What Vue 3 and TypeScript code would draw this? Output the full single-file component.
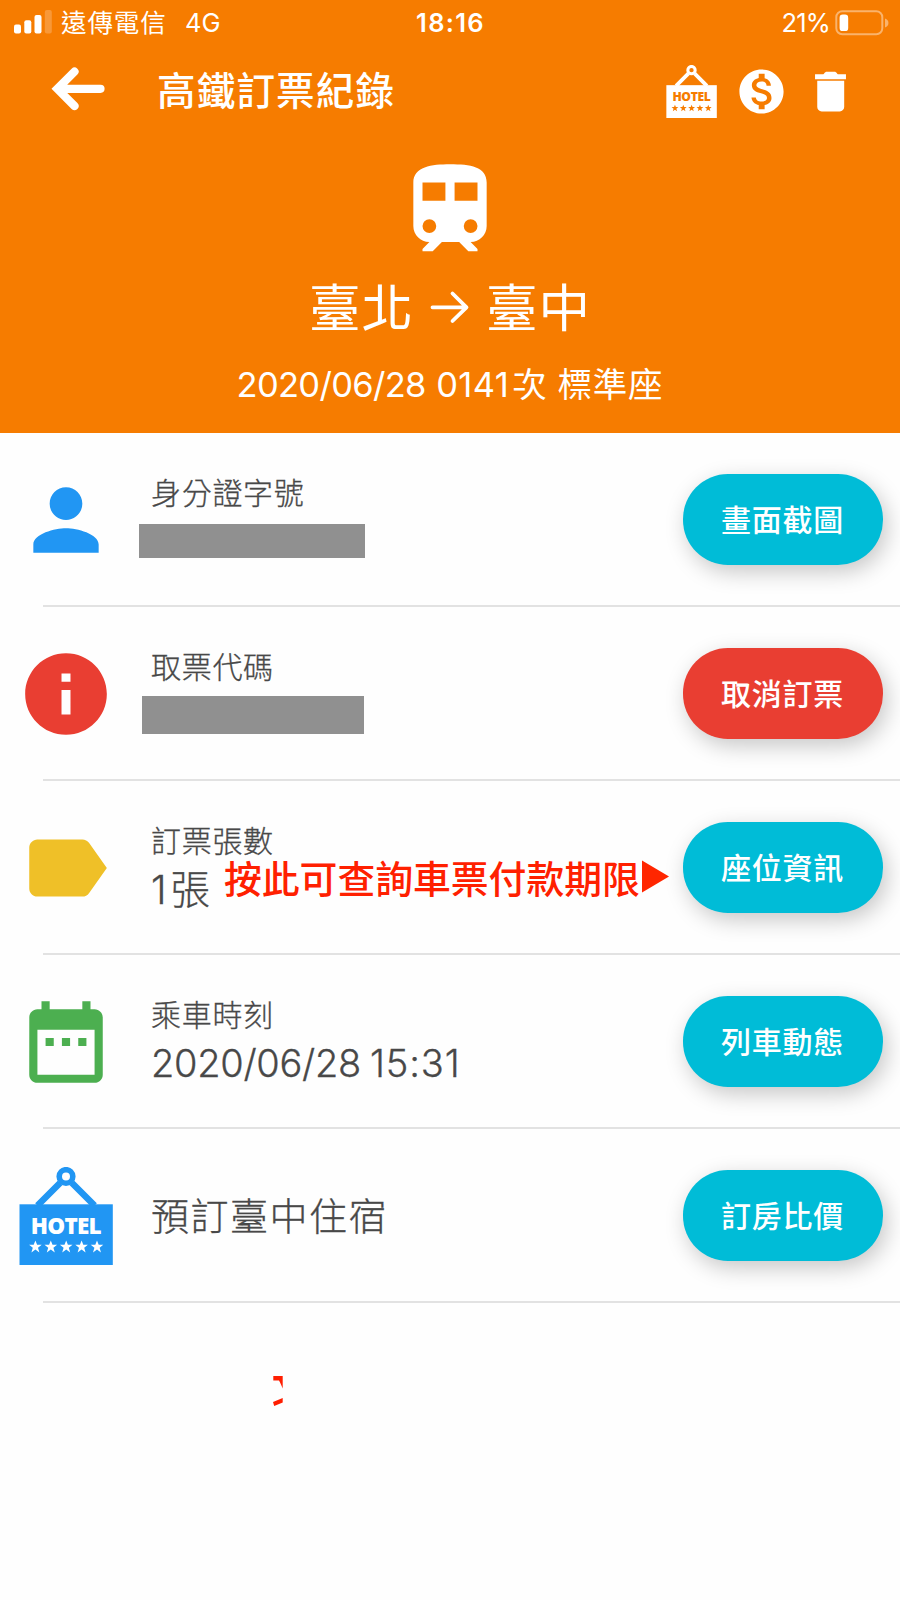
<script setup lang="ts">
interface Row {
  icon: 'person' | 'info' | 'label' | 'calendar' | 'hotel'
  label?: string
  value?: string
  time?: string
  mask?: string
  action: string
  danger?: boolean
}

const rows: Row[] = [
  { icon: 'person', label: '身分證字號', mask: 'mask-id', action: '畫面截圖' },
  { icon: 'info', label: '取票代碼', mask: 'mask-code', action: '取消訂票', danger: true },
  { icon: 'label', label: '訂票張數', value: '1張', action: '座位資訊' },
  { icon: 'calendar', label: '乘車時刻', value: '2020/06/28', time: '15:31', action: '列車動態' },
  { icon: 'hotel', value: '預訂臺中住宿', action: '訂房比價' },
]

const paths: Record<string, string> = {
  person: 'M12 12c2.21 0 4-1.79 4-4s-1.79-4-4-4-4 1.79-4 4 1.79 4 4 4zm0 2c-2.67 0-8 1.34-8 4v2h16v-2c0-2.66-5.33-4-8-4z',
  info: 'M12 2C6.48 2 2 6.48 2 12s4.48 10 10 10 10-4.48 10-10S17.52 2 12 2zm1.1 15h-2.2v-6h2.2v6zm0-8h-2.2V7h2.2v2z',
  label: 'M17.63 5.84C17.27 5.33 16.67 5 16 5L5 5.01C3.9 5.01 3 5.9 3 7v10c0 1.1.9 1.99 2 1.99L16 19c.67 0 1.27-.33 1.63-.84L22 12l-4.37-6.16z',
  calendar: 'M9 11H7v2h2v-2zm4 0h-2v2h2v-2zm4 0h-2v2h2v-2zm2-7h-1V2h-2v2H8V2H6v2H5c-1.11 0-1.99.9-1.99 2L3 20c0 1.1.89 2 2 2h14c1.1 0 2-.9 2-2V6c0-1.1-.9-2-2-2zm0 16H5V9h14v11z',
}

const star = 'M0-6.4 1.7-2 6.3-2 2.6.9 4 5.6 0 2.8-4 5.6-2.6.9-6.3-2-1.7-2Z'
const starXs = [18.4, 33.8, 49.2, 64.6, 80]
</script>

<template>
  <main class="screen">
    <header class="hero">
      <div class="status">
        <div class="status-left">
          <svg class="signal" width="38" height="24" viewBox="0 0 38 24" fill="#fff">
            <rect x="0" y="14.5" width="7" height="9" rx="2" />
            <rect x="10.3" y="10.3" width="7" height="13.2" rx="2" />
            <rect x="20.5" y="5" width="7" height="18.5" rx="2" />
            <rect x="30.8" y="0" width="7" height="23.5" rx="2" opacity=".22" />
          </svg>
          <span class="carrier">遠傳電信</span>
          <span class="network">4G</span>
        </div>
        <span class="clock">18:16</span>
        <div class="status-right">
          <span class="percent">21%</span>
          <svg width="54" height="26" viewBox="0 0 54 26">
            <rect x="1.3" y="1.3" width="46" height="23" rx="6" fill="none" stroke="#fff" stroke-opacity=".42" stroke-width="2" />
            <rect x="4.6" y="4.5" width="8.6" height="16.6" rx="3.2" fill="#fff" />
            <path d="M50 8.5c4.6 1.5 4.6 7.5 0 9z" fill="#fff" opacity=".42" />
          </svg>
        </div>
      </div>

      <nav class="bar">
        <svg class="back" width="56" height="46" viewBox="0 0 56 46" fill="none" stroke="#fff" stroke-width="8.2" stroke-linecap="round" stroke-linejoin="miter">
          <path d="M24.5 5.6 7.3 22.8 24.5 40M8 22.8H50.500" />
        </svg>
        <h1 class="title">高鐵訂票紀錄</h1>
        <div class="tools">
          <svg class="tool" viewBox="0 0 98 98">
            <g fill="none" stroke="#fff">
              <circle cx="49" cy="9.5" r="6.8" stroke-width="5.6" />
              <path d="M43 16 20.5 38.5M55 16l22.5 22.5" stroke-width="7" />
            </g>
            <rect x="2.5" y="37.3" width="93.3" height="60.7" fill="#fff" />
            <text class="sign" x="49.2" y="66.8" textLength="71" fill="#f67c00">HOTEL</text>
            <path v-for="x in starXs" :key="x" :d="star" :transform="`translate(${x} 79.8)`" fill="#f67c00" />
          </svg>
          <svg class="tool" viewBox="0 0 24 24" fill="#fff">
            <path d="M12 2C6.48 2 2 6.48 2 12s4.48 10 10 10 10-4.48 10-10S17.52 2 12 2zm1.41 16.09V20h-2.67v-1.93c-1.71-.36-3.16-1.46-3.27-3.4h1.96c.1 1.05.82 1.87 2.65 1.87 1.96 0 2.4-.98 2.4-1.59 0-.83-.44-1.61-2.67-2.14-2.48-.6-4.18-1.62-4.18-3.67 0-1.72 1.39-2.84 3.11-3.21V4h2.67v1.95c1.86.45 2.79 1.86 2.85 3.39H14.3c-.05-1.11-.64-1.87-2.22-1.87-1.5 0-2.4.68-2.4 1.64 0 .84.65 1.39 2.67 1.91s4.18 1.39 4.18 3.91c-.01 1.83-1.38 2.83-3.12 3.16z" />
          </svg>
          <svg class="tool" viewBox="0 0 24 24" fill="#fff">
            <path d="M6 7.1h12.2V19c0 1.1-.9 2-2 2H8c-1.1 0-2-.9-2-2zM5 4.2h3.5c.7 0 .8-1.2 1.8-1.2h3.5c1 0 1.1 1.2 1.8 1.2H19v2.2H5z" />
          </svg>
        </div>
      </nav>

      <svg class="train" width="110" height="110" viewBox="0 0 24 24" fill="#fff">
        <path fill-rule="evenodd" d="M12 2c-4 0-8 .5-8 4v9.5C4 17.43 5.57 19 7.5 19L6 20.5v.5h2.23l2-2H14l2 2h2v-.5L16.5 19c1.93 0 3.5-1.57 3.5-3.5V6c0-3.5-3.58-4-8-4zM6 6h5v4H6zM13 6h5v4h-5zM7.5 14a1.5 1.5 0 1 1 0 3 1.5 1.5 0 0 1 0-3zM16.5 14a1.5 1.5 0 1 1 0 3 1.5 1.5 0 0 1 0-3z" />
      </svg>

      <div class="route">
        <span>臺北</span>
        <svg width="40" height="34" viewBox="0 0 40 34" fill="none" stroke="#fff" stroke-width="3.8" stroke-linecap="round" stroke-linejoin="round">
          <path d="M2.5 17.3H36.5M22.5 3.5 36.5 17.3 22.5 31" />
        </svg>
        <span>臺中</span>
      </div>
      <p class="trip">
        <span class="trip-date">2020/06/28</span>
        <span class="trip-num">0141</span>
        <span>次</span>
        <span class="trip-seat">標準座</span>
      </p>
    </header>

    <section class="list">
      <div v-for="row in rows" :key="row.action" class="row">
        <div class="row-icon">
          <svg v-if="row.icon === 'hotel'" class="glyph" viewBox="0 0 98 98">
            <g fill="none" stroke="#2196f3">
              <circle cx="49" cy="9.5" r="6.8" stroke-width="5.6" />
              <path d="M43 16 20.5 38.5M55 16l22.5 22.5" stroke-width="6.6" />
            </g>
            <rect x="2.5" y="37.3" width="93.3" height="60.7" fill="#2196f3" />
            <text class="sign" x="49.2" y="66.8" textLength="71" fill="#fff">HOTEL</text>
            <path v-for="x in starXs" :key="x" :d="star" :transform="`translate(${x} 79.8)`" fill="#fff" />
          </svg>
          <svg v-else class="glyph" :class="row.icon" viewBox="0 0 24 24"><path :d="paths[row.icon]" /></svg>
        </div>
        <div class="info-text">
          <div v-if="row.label" class="caption">{{ row.label }}</div>
          <div class="value">
            <span v-if="row.mask" class="mask" :class="row.mask"></span>
            <span v-else :class="`text-${row.icon}`">{{ row.value }}</span>
            <span v-if="row.time" class="time">{{ row.time }}</span>
          </div>
        </div>
        <button class="action" :class="{ danger: row.danger }">{{ row.action }}</button>
        <div v-if="row.icon === 'label'" class="note">
          <span>按此可查詢車票付款期限</span>
          <svg width="28" height="33" viewBox="0 0 28 33"><path d="M0 .5 27 16.5 0 32.5z" fill="#ff2600" /></svg>
        </div>
      </div>
    </section>

    <svg class="mark" width="10" height="30" viewBox="0 0 10 30" fill="#ff1e00">
      <path d="M.3 0H9.7V12.5C8.6 9.5 7.5 7 6 4.4H.3zM0 26 9.7 22V26.5L1.2 30z" />
    </svg>
  </main>
</template>

<style>
body {
  background: #fefefe;
}
</style>

<style scoped>
.screen {
  width: 900px;
  height: 1600px;
  overflow: hidden;
  background: #fefefe;
  font-family: Inter, "Noto Sans CJK TC", sans-serif;
  color: #484848;
}
.hero {
  height: 432.5px;
  background: #f67c00;
  color: #fff;
}
.status {
  display: grid;
  grid-template-columns: 1fr auto 1fr;
  align-items: center;
  height: 46px;
  padding: 0 11px 0 14px;
  font-size: 25.5px;
  line-height: 46px;
}
.status-left,
.status-right {
  display: flex;
  align-items: center;
}
.status-right {
  justify-content: flex-end;
  gap: 5px;
}
.signal {
  margin-right: 9px;
  margin-top: -2px;
}
.carrier {
  letter-spacing: 0.9px;
  margin-right: 18.5px;
}
.clock {
  font-weight: 600;
  letter-spacing: 1.3px;
  margin-right: 2px;
}
.percent {
  letter-spacing: -0.8px;
}
.bar {
  display: flex;
  align-items: center;
  height: 90px;
  padding: 0 43px 0 50px;
}
.back {
  margin-top: -5px;
}
.title {
  margin: 0 0 0 51px;
  font-size: 38.5px;
  line-height: 60px;
  font-weight: 500;
  letter-spacing: 1.2px;
}
.tools {
  display: flex;
  gap: 16.4px;
  margin-left: auto;
}
.tool {
  width: 53px;
  height: 53px;
}
.sign {
  font: 800 22.5px "Open Sans", "Noto Sans", sans-serif;
  text-anchor: middle;
}
.train {
  display: block;
  margin: 19px auto 0;
}
.route {
  display: flex;
  justify-content: center;
  align-items: center;
  height: 70px;
  margin-top: 7px;
  font-size: 51.5px;
  letter-spacing: 1px;
  gap: 16px;
}
.route span {
  line-height: 70px;
  margin-top: 1px;
}
.trip {
  display: flex;
  justify-content: center;
  margin: 16px 0 0;
  height: 54px;
  line-height: 54px;
  font-size: 34.5px;
  letter-spacing: 0.8px;
}
.trip-date {
  letter-spacing: -0.7px;
  margin-right: 10.5px;
}
.trip-num {
  margin-right: 3px;
  letter-spacing: 0.4px;
}
.trip-seat {
  margin-left: 10px;
}
.list {
  padding-top: 0.5px;
}
.row {
  position: relative;
  display: flex;
  align-items: center;
  height: 172px;
  padding: 0 17px 2px 0;
  background: linear-gradient(#e2e2e2, #e2e2e2) 43px 100% / 100% 2px no-repeat;
}
.row-icon {
  display: flex;
  justify-content: center;
  width: 132px;
  padding-top: 1px;
  margin-right: 19px;
}
.glyph {
  width: 98px;
  height: 98px;
}
.person {
  fill: #2196f3;
}
.info {
  fill: #e93e32;
}
.label {
  fill: #efc028;
}
.calendar {
  fill: #4caf50;
}
.info-text {
  flex: 1;
}
.caption {
  height: 40px;
  line-height: 40px;
  margin-bottom: 4px;
  font-size: 30px;
  font-weight: 300;
  letter-spacing: 0.7px;
  -webkit-text-stroke: 0.3px currentColor;
}
.value {
  display: flex;
  align-items: center;
  height: 48px;
  font-size: 38px;
  font-weight: 300;
  -webkit-text-stroke: 0.3px currentColor;
}
.text-hotel {
  letter-spacing: 1.5px;
  margin-top: -4px;
}
.text-label {
  font-size: 39.5px;
  letter-spacing: 4px;
  margin-top: -6px;
}
.text-calendar {
  letter-spacing: -0.3px;
}
.time {
  margin-left: 9px;
  letter-spacing: 0.9px;
}
.mask {
  background: #909090;
}
.mask-id {
  width: 226px;
  height: 34px;
  margin-left: -12px;
}
.mask-code {
  width: 222px;
  height: 38px;
  margin-left: -9.5px;
}
.action {
  width: 200px;
  height: 91px;
  border: 0;
  border-radius: 45px;
  padding: 0 1px 2px 0;
  background: #00bcd7;
  color: #fff;
  font: 500 30px "Noto Sans CJK TC", sans-serif;
  letter-spacing: 0.7px;
  box-shadow: 4px 7px 22px rgba(0, 0, 0, 0.22);
}
.action.danger {
  background: #e93e32;
}
.note {
  position: absolute;
  left: 224px;
  top: 71px;
  display: flex;
  align-items: center;
  gap: 2px;
  height: 54px;
  font-size: 37.8px;
  line-height: 54px;
  font-weight: 500;
  color: #ff2000;
}
.note svg {
  margin-top: -5px;
}
.mark {
  display: block;
  margin: 72.5px 0 0 273px;
}
</style>
